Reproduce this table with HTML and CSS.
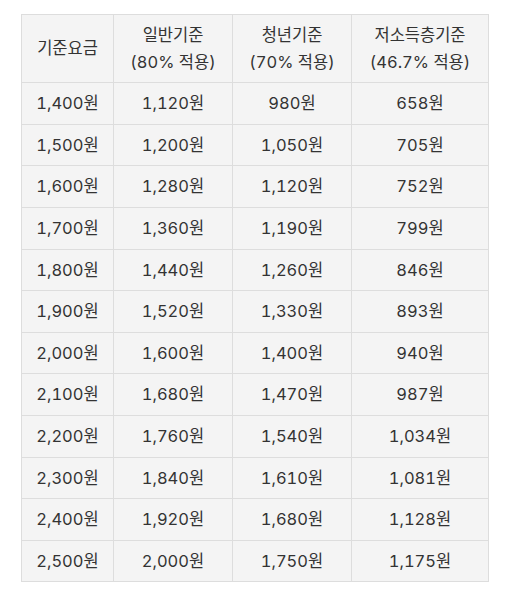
FILE: index.html
```html
<!DOCTYPE html>
<html lang="ko">
<head>
<meta charset="utf-8">
<link rel="stylesheet" href="styles.css">
</head>
<body>
<div class="wrap">
<table class="fare">
<colgroup>
<col class="c1"><col class="c2"><col class="c3"><col class="c4">
</colgroup>
<thead>
<tr><th>기준요금</th><th>일반기준<br>(80% 적용)</th><th>청년기준<br>(70% 적용)</th><th>저소득층기준<br>(46.7% 적용)</th></tr>
</thead>
<tbody>
<tr><td>1,400원</td><td>1,120원</td><td>980원</td><td>658원</td></tr>
<tr><td>1,500원</td><td>1,200원</td><td>1,050원</td><td>705원</td></tr>
<tr><td>1,600원</td><td>1,280원</td><td>1,120원</td><td>752원</td></tr>
<tr><td>1,700원</td><td>1,360원</td><td>1,190원</td><td>799원</td></tr>
<tr><td>1,800원</td><td>1,440원</td><td>1,260원</td><td>846원</td></tr>
<tr><td>1,900원</td><td>1,520원</td><td>1,330원</td><td>893원</td></tr>
<tr><td>2,000원</td><td>1,600원</td><td>1,400원</td><td>940원</td></tr>
<tr><td>2,100원</td><td>1,680원</td><td>1,470원</td><td>987원</td></tr>
<tr><td>2,200원</td><td>1,760원</td><td>1,540원</td><td>1,034원</td></tr>
<tr><td>2,300원</td><td>1,840원</td><td>1,610원</td><td>1,081원</td></tr>
<tr><td>2,400원</td><td>1,920원</td><td>1,680원</td><td>1,128원</td></tr>
<tr><td>2,500원</td><td>2,000원</td><td>1,750원</td><td>1,175원</td></tr>
</tbody>
</table>
</div>
</body>
</html>
```
FILE: styles.css
```css
html, body {
  margin: 0;
  background: #fff;
}
.wrap {
  padding: 14px 0 0 21px;
}
.fare {
  border-collapse: collapse;
  table-layout: fixed;
  width: 467px;
  font-family: "Inter", "Noto Sans CJK KR", sans-serif;
  font-variant-numeric: tabular-nums;
  font-size: 16.5px;
  line-height: 26.6px;
  color: #333;
}
.c1 { width: 92px; }
.c2 { width: 119px; }
.c3 { width: 119px; }
.c4 { width: 137px; }
.fare th, .fare td {
  background: #f4f4f4;
  border: 1px solid #ddd;
  text-align: center;
  font-weight: normal;
  padding: 7px 0;
  white-space: nowrap;
}
```
